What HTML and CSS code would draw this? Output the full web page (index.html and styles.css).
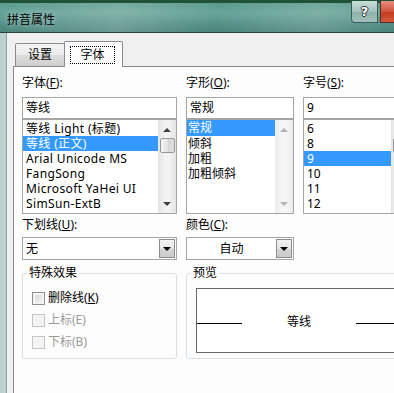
FILE: index.html
```html
<!DOCTYPE html>
<html lang="zh-CN">
<head>
  <meta charset="UTF-8">
  <meta name="viewport" content="width=device-width, initial-scale=1.0">
  <title>拼音属性</title>
  <link rel="stylesheet" href="styles.css">
</head>
<body>
  <div class="window">
    <div class="titlebar">
      <span class="title">拼音属性</span>
      <div class="caption-buttons">
        <div class="btn-help">?</div>
        <div class="btn-close"></div>
      </div>
    </div>
    <div class="frame">
      <div class="client">
        <div class="tabs">
          <div class="tab">设置</div>
          <div class="tab active"><span class="focus">字体</span></div>
        </div>
        <div class="panel">
          <div class="grid">
            <div class="col">
              <div class="label">字体(<u>F</u>):</div>
              <div class="input">等线</div>
              <div class="listbox">
                <ul class="items items-font">
                  <li>等线 Light (标题)</li>
                  <li class="selected">等线 (正文)</li>
                  <li>Arial Unicode MS</li>
                  <li>FangSong</li>
                  <li>Microsoft YaHei UI</li>
                  <li>SimSun-ExtB</li>
                </ul>
                <div class="scrollbar">
                  <span class="arrow up"></span>
                  <span class="thumb"></span>
                  <span class="arrow down"></span>
                </div>
              </div>
            </div>
            <div class="col">
              <div class="label">字形(<u>O</u>):</div>
              <div class="input">常规</div>
              <div class="listbox">
                <ul class="items items-style">
                  <li class="selected">常规</li>
                  <li>倾斜</li>
                  <li>加粗</li>
                  <li>加粗倾斜</li>
                </ul>
                <div class="scrollbar disabled">
                  <span class="arrow up"></span>
                  <span class="arrow down"></span>
                </div>
              </div>
            </div>
            <div class="col">
              <div class="label">字号(<u>S</u>):</div>
              <div class="input">9</div>
              <div class="listbox">
                <ul class="items items-size">
                  <li>6</li>
                  <li>8</li>
                  <li class="selected">9</li>
                  <li>10</li>
                  <li>11</li>
                  <li>12</li>
                </ul>
                <div class="scrollbar">
                  <span class="arrow up"></span>
                  <span class="thumb"></span>
                  <span class="arrow down"></span>
                </div>
              </div>
            </div>

            <div class="col">
              <div class="label label-row2">下划线(<u>U</u>):</div>
              <div class="combo">
                <span class="combo-text">无</span>
                <span class="combo-btn"></span>
              </div>
            </div>
            <div class="col">
              <div class="label label-row2">颜色(<u>C</u>):</div>
              <div class="combo">
                <span class="combo-text center">自动</span>
                <span class="combo-btn"></span>
              </div>
            </div>
            <div class="col"></div>
          </div>

          <div class="groups">
            <div class="group group-effects">
              <span class="group-title">特殊效果</span>
              <label class="check"><span class="box"></span>删除线(<u>K</u>)</label>
              <label class="check disabled"><span class="box"></span>上标(E)</label>
              <label class="check disabled"><span class="box"></span>下标(B)</label>
            </div>
            <div class="group group-preview">
              <span class="group-title">预览</span>
              <div class="preview">
                <span class="rule"></span>
                <span class="sample">等线</span>
                <span class="rule long"></span>
              </div>
            </div>
          </div>
        </div>
      </div>
    </div>
  </div>
</body>
</html>
```

FILE: styles.css
```css
* {
  box-sizing: border-box;
}
html, body {
  margin: 0;
  padding: 0;
  overflow: hidden;
}
body {
  width: 394px;
  height: 393px;
  background: #bcd2ce;
  font-family: "Noto Sans", "Noto Sans CJK SC", sans-serif;
  font-size: 12px;
  color: #000;
}
.window {
  width: 394px;
  height: 393px;
  overflow: hidden;
}

/* title bar */
.titlebar {
  height: 33px;
  display: flex;
  justify-content: space-between;
  align-items: flex-start;
  padding-left: 7px;
  border-top: 3px solid #1f5238;
  border-bottom: 1px solid #26443d;
  background:
    linear-gradient(100deg, rgba(255,255,255,0) 0, rgba(255,255,255,0.18) 30%, rgba(255,255,255,0) 55%, rgba(255,255,255,0.15) 80%, rgba(255,255,255,0) 100%),
    linear-gradient(to bottom, #5a998e 0, #68a499 10px, #56918a 20px, #4a8379 29px);
}
.title {
  margin-top: 10px;
  line-height: 14px;
  font-size: 12px;
  text-shadow: 0 0 6px rgba(255,255,255,0.6);
}
.caption-buttons {
  display: flex;
  gap: 2px;
  margin-right: -29px;
  margin-top: -2px;
}
.btn-help {
  width: 27px;
  height: 22px;
  border: 1px solid #3a5e57;
  border-top: none;
  border-radius: 0 0 0 4px;
  background: linear-gradient(to bottom, #c8dcd7, #a5c2bc 50%, #8fb1a9 51%, #9fbfb8);
  color: #fff;
  font-family: "DejaVu Sans", sans-serif;
  font-weight: bold;
  font-size: 13px;
  line-height: 21px;
  text-align: center;
  text-shadow: 1px 0 0 #333, -1px 0 0 #333, 0 1px 0 #333, 0 -1px 0 #333;
}
.btn-close {
  width: 43px;
  height: 22px;
  border: 1px solid #5a2a20;
  border-top: none;
  background: linear-gradient(to bottom, #e6907f, #d0533c 50%, #c23a1e 51%, #d6583c);
}

/* frame + client */
.frame {
  padding-left: 6px;
  height: 400px;
}
.client {
  height: 100%;
  background: #f0f0f0;
  border-left: 1px solid #8fa39f;
  padding: 8px 0 0 6px;
}

/* tabs */
.tabs {
  display: flex;
  align-items: flex-end;
  height: 25px;
  padding-left: 2px;
  position: relative;
  z-index: 1;
}
.tab {
  width: 50px;
  height: 23px;
  border: 1px solid #898c95;
  border-bottom: none;
  border-radius: 2px 2px 0 0;
  background: linear-gradient(to bottom, #f3f3f3, #ebebeb 50%, #dddddd 51%, #cfcfcf);
  text-align: center;
  line-height: 22px;
}
.tab.active {
  width: 59px;
  height: 26px;
  margin-left: -1px;
  margin-bottom: -1px;
  background: #fdfdfd;
  padding: 4px 7px 0 5px;
  line-height: 16px;
}
.tab.active .focus {
  display: block;
  height: 18px;
  border: 1px dotted #000;
  text-align: center;
  line-height: 15px;
}

/* panel */
.panel {
  width: 420px;
  height: 380px;
  border: 1px solid #898c95;
  background: #fdfdfd;
  padding: 8px 0 0 8px;
}
.grid {
  display: grid;
  grid-template-columns: 155px 108px 107px;
  column-gap: 9px;
}
.col {
  display: flex;
  flex-direction: column;
}
.label {
  height: 22px;
  line-height: 16px;
}
.label-row2 {
  margin-top: 3px;
  height: 20px;
}
.input {
  height: 22px;
  border: 1px solid #a5a5a5;
  background: #fff;
  padding-left: 3px;
  line-height: 20px;
}
.listbox {
  height: 95px;
  border: 1px solid #a5a5a5;
  background: #fff;
  display: flex;
}
.items {
  list-style: none;
  margin: 0;
  padding: 1px 0 0 0;
  flex: 1;
  min-width: 0;
}
.items li {
  height: 15px;
  line-height: 15px;
  padding-left: 3px;
  white-space: nowrap;
}
.items-font li {
  letter-spacing: 0.35px;
}
.items-style li {
  padding-left: 1px;
}
.items-style li.selected {
  margin-top: -1px;
  height: 16px;
}
.items li.selected {
  background: #3399ff;
  color: #fff;
}

/* scrollbars */
.scrollbar {
  width: 18px;
  flex-shrink: 0;
  display: flex;
  flex-direction: column;
  align-items: center;
  background: linear-gradient(to right, #e4e4e4, #f3f3f3 40%, #f3f3f3 60%, #e4e4e4);
}
.scrollbar.disabled {
  background: linear-gradient(to right, #ececec, #f6f6f6 40%, #f6f6f6 60%, #ececec);
}
.arrow {
  width: 0;
  height: 0;
  border-left: 4px solid transparent;
  border-right: 4px solid transparent;
}
.arrow.up {
  margin-top: 8px;
  border-bottom: 4px solid #404040;
}
.arrow.down {
  margin-top: auto;
  margin-bottom: 7px;
  border-top: 4px solid #404040;
}
.disabled .arrow.up {
  border-bottom-color: #b4b4b4;
}
.disabled .arrow.down {
  border-top-color: #b4b4b4;
}
.thumb {
  margin-top: 6px;
  width: 15px;
  height: 15px;
  border: 1px solid #979797;
  border-radius: 2px;
  background: linear-gradient(to right, #f4f4f4, #e4e4e4 50%, #d6d6d6 51%, #e0e0e0);
}

/* combo boxes */
.combo {
  height: 23px;
  border: 1px solid #a5a5a5;
  background: #fff;
  display: flex;
  padding: 1px 1px 1px 0;
}
.combo-text {
  flex: 1;
  padding-left: 3px;
  line-height: 19px;
}
.combo-text.center {
  text-align: center;
  padding-left: 0;
}
.combo-btn {
  width: 16px;
  border: 1px solid #8c8c8c;
  background: linear-gradient(to bottom, #f2f2f2, #e6e6e6 50%, #d4d4d4 51%, #cbcbcb);
  display: flex;
  align-items: center;
  justify-content: center;
}
.combo-btn::after {
  content: "";
  border-left: 4px solid transparent;
  border-right: 4px solid transparent;
  border-top: 4px solid #000;
}

/* group boxes */
.groups {
  display: flex;
  gap: 9px;
  margin-top: 13px;
}
.group {
  position: relative;
  height: 86px;
  border: 1px solid #d5dfe5;
  border-radius: 3px;
}
.group-title {
  position: absolute;
  top: -9px;
  left: 4px;
  padding: 0 2px;
  background: #fdfdfd;
  line-height: 16px;
}
.group-effects {
  width: 155px;
  padding: 13px 0 0 9px;
}
.group-preview {
  width: 230px;
  padding: 14px 0 0 9px;
}
.check {
  display: flex;
  align-items: center;
  height: 22px;
  line-height: 16px;
}
.check .box {
  width: 13px;
  height: 13px;
  margin-right: 3px;
  border: 1px solid #8e8f8f;
  background: linear-gradient(135deg, #d5d5d5, #f4f4f4);
  box-shadow: inset 0 0 0 2px #f4f4f4;
}
.check.disabled {
  color: #9a9a9a;
}
.check.disabled .box {
  border-color: #c4c4c4;
  background: #f4f4f4;
  box-shadow: none;
}

/* preview */
.preview {
  height: 65px;
  border: 1px solid #686868;
  background: #fff;
  display: flex;
  align-items: center;
  padding-top: 3px;
}
.rule {
  width: 45px;
  height: 1px;
  margin-top: 3px;
  background: #000;
  flex-shrink: 0;
}
.rule.long {
  width: 80px;
}
.sample {
  padding: 0 45px;
  line-height: 16px;
  flex-shrink: 0;
}
```
